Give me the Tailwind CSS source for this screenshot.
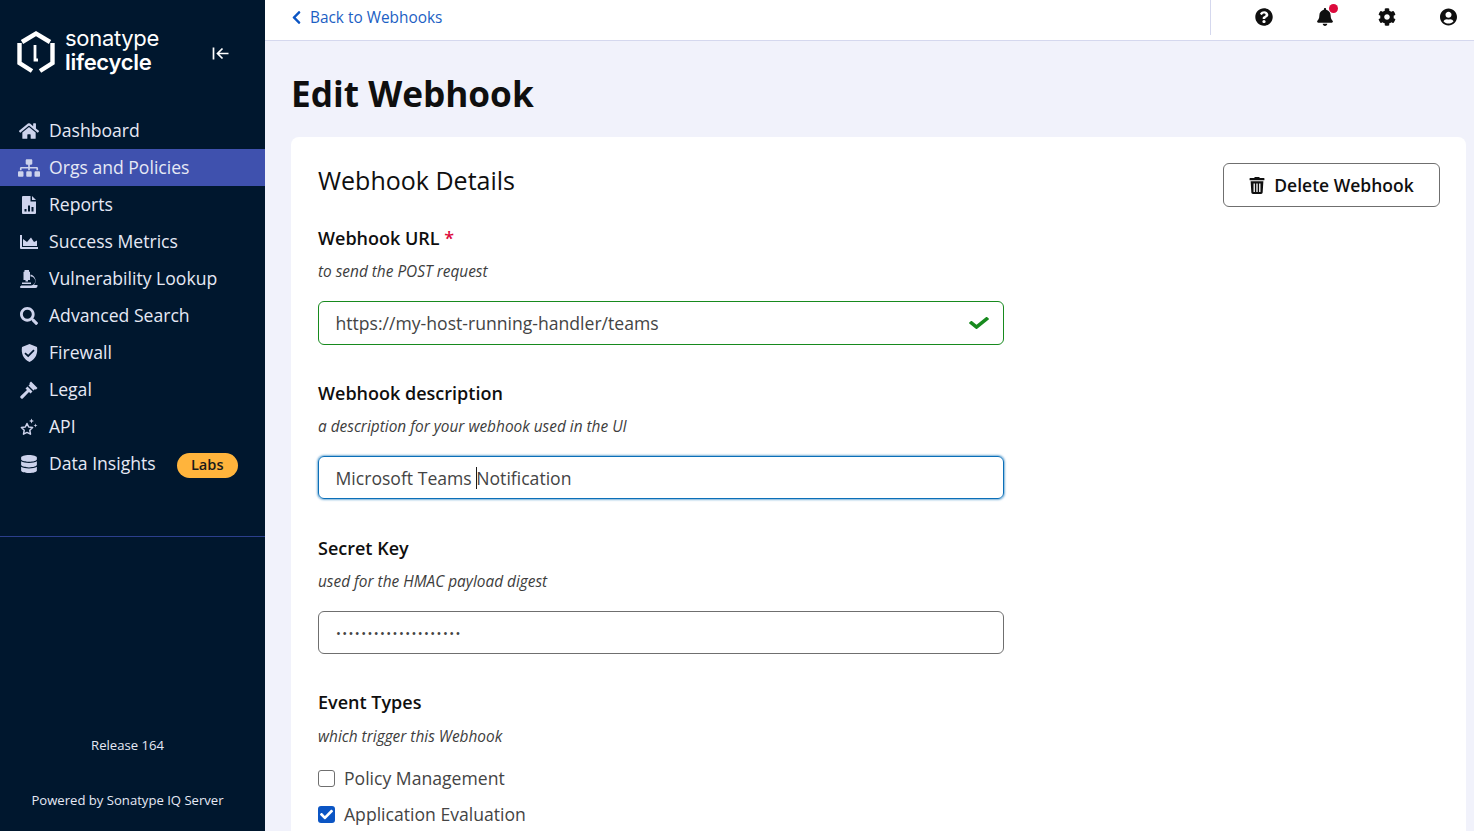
<!DOCTYPE html>
<html lang="en">
<head>
    <meta charset="UTF-8">
    <title>Edit Webhook - Sonatype Lifecycle</title>
    <script src="https://cdn.jsdelivr.net/npm/@tailwindcss/browser@4"></script>
</head>
<body class="h-screen overflow-hidden flex bg-[#f1f2fb] font-['Open_Sans',sans-serif] text-[#0f0f0f]">
    <!-- Sidebar -->
    <aside class="w-[265px] shrink-0 h-full flex flex-col bg-[#00172e] text-[#e6e9f5]">
        <div class="h-[112px] shrink-0 pl-[17px] pt-[27px] flex items-start">
            <svg class="w-[38px] h-[46px] mt-[3px] text-white" viewBox="0 0 38 46" fill="none" stroke="currentColor" stroke-width="4.4">
                <path d="M5 12 L19 3.5 L33 12"/>
                <path d="M2.5 13 V33 L15 41"/>
                <path d="M35.5 13 V33 L23 41"/>
                <path d="M18 15 V30 H21" stroke-width="2.8"/>
            </svg>
            <div class="ml-[10px] mt-[-1px] text-white text-[22px] leading-[24px] font-['Inter',sans-serif] tracking-[-0.3px]">
                <div class="font-normal">sonatype</div>
                <div class="font-semibold">lifecycle</div>
            </div>
            <svg class="w-[18px] h-[16px] ml-[53px] mt-[19px] text-white" viewBox="0 0 18 16" fill="none" stroke="currentColor" stroke-width="1.7">
                <path d="M1.5 1.5 V13.5"/>
                <path d="M16.5 7.5 H5.5 M10.5 2.5 L5.5 7.5 L10.5 12.5"/>
            </svg>
        </div>

        <nav class="text-[17.6px] h-[370px] shrink-0">
            <a class="h-[37px] flex items-center">
                <span class="w-[49px] flex justify-center pl-[9px] text-[#cdd3ec]">
                    <svg class="w-[20px] h-[18px]" viewBox="0 0 576 512" fill="currentColor"><path d="M280.37 148.26L96 300.11V464a16 16 0 0 0 16 16l112.06-.29a16 16 0 0 0 15.92-16V368a16 16 0 0 1 16-16h64a16 16 0 0 1 16 16v95.64a16 16 0 0 0 16 16.05L464 480a16 16 0 0 0 16-16V300L295.67 148.26a12.19 12.19 0 0 0-15.3 0zM571.6 251.47L488 182.56V44.05a12 12 0 0 0-12-12h-56a12 12 0 0 0-12 12v72.61L318.47 43a48 48 0 0 0-61 0L4.34 251.47a12 12 0 0 0-1.6 16.9l25.5 31A12 12 0 0 0 45.15 301l235.22-193.74a12.19 12.19 0 0 1 15.3 0L530.9 301a12 12 0 0 0 16.9-1.6l25.5-31a12 12 0 0 0-1.7-16.93z"/></svg>
                </span>
                Dashboard
            </a>
            <a class="h-[37px] flex items-center bg-[#3f51ae]">
                <span class="w-[49px] flex justify-center pl-[9px] text-[#cdd3ec]">
                    <svg class="w-[22px] h-[18px]" viewBox="0 0 640 512" fill="currentColor"><path d="M128 352H32c-17.67 0-32 14.33-32 32v96c0 17.67 14.33 32 32 32h96c17.67 0 32-14.33 32-32v-96c0-17.67-14.33-32-32-32zm-24-80h192v48h48v-48h192v48h48v-57.59c0-21.17-17.23-38.41-38.41-38.41H344v-64h40c17.67 0 32-14.33 32-32V32c0-17.67-14.33-32-32-32H256c-17.67 0-32 14.33-32 32v96c0 17.67 14.33 32 32 32h40v64H94.41C73.23 224 56 241.23 56 262.41V320h48v-48zm264 80h-96c-17.67 0-32 14.33-32 32v96c0 17.67 14.33 32 32 32h96c17.67 0 32-14.33 32-32v-96c0-17.67-14.33-32-32-32zm240 0h-96c-17.67 0-32 14.33-32 32v96c0 17.67 14.33 32 32 32h96c17.67 0 32-14.33 32-32v-96c0-17.67-14.33-32-32-32z"/></svg>
                </span>
                Orgs and Policies
            </a>
            <a class="h-[37px] flex items-center">
                <span class="w-[49px] flex justify-center pl-[9px] text-[#cdd3ec]">
                    <svg class="w-[14px] h-[18px]" viewBox="0 0 14 18" fill="currentColor"><path fill-rule="evenodd" d="M1 0 H8.5 V5.5 H14 V17 a1 1 0 0 1 -1 1 H1 a1 1 0 0 1 -1 -1 V1 a1 1 0 0 1 1 -1 Z M10 0 L14 4 H10 Z M2.5 13 V15.5 H4.5 V13 Z M6 9.5 V15.5 H8 V9.5 Z M9.5 11 V15.5 H11.5 V11 Z"/></svg>
                </span>
                Reports
            </a>
            <a class="h-[37px] flex items-center">
                <span class="w-[49px] flex justify-center pl-[9px] text-[#cdd3ec]">
                    <svg class="w-[18px] h-[14px]" viewBox="0 0 18 14" fill="currentColor"><path d="M0 0 H2 V12 H18 V14 H1 a1 1 0 0 1 -1 -1 Z M3 11 V4 L7 7 L11 2.5 L14 7 L17 5.5 V11 Z"/></svg>
                </span>
                Success Metrics
            </a>
            <a class="h-[37px] flex items-center">
                <span class="w-[49px] flex justify-center pl-[9px] text-[#cdd3ec]">
                    <svg class="w-[18px] h-[18px]" viewBox="0 0 18 18" fill="currentColor"><path d="M4.5 0 H9 V1.5 L10 2 V10 H8 V11.5 H5.5 V10 H3.5 V2 L4.5 1.5 Z M10.5 4.5 A6.5 6.5 0 0 1 14 15 H17.5 V16 a2 2 0 0 1 -2 2 H1 a0.5 0.5 0 0 1 0 -2 V15.5 H11 A4.5 4.5 0 0 0 10.5 6.5 Z M2 12.5 H11 V14 H2 Z"/></svg>
                </span>
                Vulnerability Lookup
            </a>
            <a class="h-[37px] flex items-center">
                <span class="w-[49px] flex justify-center pl-[9px] text-[#cdd3ec]">
                    <svg class="w-[18px] h-[18px]" viewBox="0 0 512 512" fill="currentColor"><path d="M505 442.7L405.3 343c-4.5-4.5-10.6-7-17-7H372c27.6-35.3 44-79.7 44-128C416 93.1 322.9 0 208 0S0 93.1 0 208s93.1 208 208 208c48.3 0 92.7-16.4 128-44v16.3c0 6.4 2.5 12.5 7 17l99.7 99.7c9.4 9.4 24.6 9.4 33.9 0l28.3-28.3c9.4-9.4 9.4-24.6.1-34zM208 336c-70.7 0-128-57.2-128-128 0-70.7 57.2-128 128-128 70.7 0 128 57.2 128 128 0 70.7-57.2 128-128 128z"/></svg>
                </span>
                Advanced Search
            </a>
            <a class="h-[37px] flex items-center">
                <span class="w-[49px] flex justify-center pl-[9px] text-[#cdd3ec]">
                    <svg class="w-[17px] h-[18px]" viewBox="0 0 17 18" fill="currentColor"><path fill-rule="evenodd" d="M8.5 0 L16 3 C17 9 15 15 8.5 18 C2 15 0 9 1 3 Z M4.5 8.5 L3.4 9.7 L7.2 13.3 L13.6 6.8 L12.4 5.6 L7.2 10.8 Z"/></svg>
                </span>
                Firewall
            </a>
            <a class="h-[37px] flex items-center">
                <span class="w-[49px] flex justify-center pl-[9px] text-[#cdd3ec]">
                    <svg class="w-[18px] h-[18px]" viewBox="0 0 18 18" fill="currentColor"><path d="M11 0.5 L17.5 7 L15.8 8.7 L15 8 L13.5 9.5 L8.5 4.5 L10 3 L9.3 2.2 Z M7.5 5.5 L12.5 10.5 L10.5 12.5 L9 11 L3 17.3 a1.4 1.4 0 0 1 -2 0 L0.7 17 a1.4 1.4 0 0 1 0 -2 L7 9 L5.5 7.5 Z"/></svg>
                </span>
                Legal
            </a>
            <a class="h-[37px] flex items-center">
                <span class="w-[49px] flex justify-center pl-[9px] text-[#cdd3ec]">
                    <svg class="w-[18px] h-[18px]" viewBox="0 0 18 18" fill="currentColor"><path d="M7 5.5 L8.7 9 L12.6 9.5 L9.8 12.3 L10.5 16.2 L7 14.4 L3.5 16.2 L4.2 12.3 L1.4 9.5 L5.3 9 Z" fill="none" stroke="currentColor" stroke-width="1.5" stroke-linejoin="round"/><path d="M11.5 0.5 L12.2 2.3 L14 3 L12.2 3.7 L11.5 5.5 L10.8 3.7 L9 3 L10.8 2.3 Z M15.5 5.5 L16 6.9 L17.5 7.5 L16 8.1 L15.5 9.5 L15 8.1 L13.5 7.5 L15 6.9 Z"/></svg>
                </span>
                API
            </a>
            <a class="h-[37px] flex items-center">
                <span class="w-[49px] flex justify-center pl-[9px] text-[#cdd3ec]">
                    <svg class="w-[16px] h-[18px]" viewBox="0 0 448 512" fill="currentColor"><path d="M448 73.143v45.714C448 159.143 347.667 192 224 192S0 159.143 0 118.857V73.143C0 32.857 100.333 0 224 0s224 32.857 224 73.143zM448 176v102.857C448 319.143 347.667 352 224 352S0 319.143 0 278.857V176c48.125 33.143 136.208 48.572 224 48.572S399.874 209.143 448 176zm0 160v102.857C448 479.143 347.667 512 224 512S0 479.143 0 438.857V336c48.125 33.143 136.208 48.572 224 48.572S399.874 369.143 448 336z"/></svg>
                </span>
                Data Insights
                <span class="ml-[21px] mt-[3px] w-[61px] h-[25px] rounded-full bg-[#ffb43c] text-[#1a1a1a] text-[14.6px] font-semibold flex items-center justify-center">Labs</span>
            </a>
        </nav>

        <div class="h-[55px] shrink-0 border-b border-[#2b3f8c]"></div>

        <div class="flex-1 flex flex-col items-center pr-[10px] text-[13.1px] text-[#e6e9f5]">
            <div class="mt-[199px] leading-[18px]">Release 164</div>
            <div class="mt-[37px] leading-[18px]">Powered by Sonatype IQ Server</div>
        </div>
    </aside>

    <!-- Main -->
    <div class="flex-1 min-w-0 h-full flex flex-col">
        <header class="h-[41px] shrink-0 bg-white border-b border-[#d5d8ee] flex items-start">
            <a class="h-[35px] flex items-center pl-[26px] text-[15.4px] text-[#1c5fc4] flex-1">
                <svg class="w-[11px] h-[15px] mr-[8px] mt-[-1px] text-[#0b55c4]" viewBox="0 0 320 512" fill="currentColor"><path d="M34.52 239.03L228.87 44.69c9.37-9.37 24.57-9.37 33.94 0l22.67 22.67c9.36 9.36 9.37 24.52.04 33.9L131.49 256l154.02 154.75c9.34 9.38 9.32 24.54-.04 33.9l-22.67 22.67c-9.37 9.37-24.57 9.37-33.94 0L34.52 272.97c-9.37-9.37-9.37-24.57 0-33.94z"/></svg>
                Back to Webhooks
            </a>
            <div class="w-[264px] h-[35px] border-l border-[#d5d8ee] flex items-center justify-between pl-[44px] pr-[17px]">
                <svg class="w-[18px] h-[18px] mt-[-1px]" viewBox="0 0 512 512" fill="#0f0f0f"><path d="M504 256c0 136.997-111.043 248-248 248S8 392.997 8 256C8 119.083 119.043 8 256 8s248 111.083 248 248zM262.655 90c-54.497 0-89.255 22.957-116.549 63.758-3.536 5.286-2.353 12.415 2.715 16.258l34.699 26.31c5.205 3.947 12.621 3.008 16.665-2.122 17.864-22.658 30.113-35.797 57.303-35.797 20.429 0 45.698 13.148 45.698 32.958 0 14.976-12.363 22.667-32.534 33.976C247.128 238.528 216 254.941 216 296v4c0 6.627 5.373 12 12 12h56c6.627 0 12-5.373 12-12v-1.333c0-28.462 83.186-29.647 83.186-106.667 0-58.002-60.165-102-116.531-102zM256 338c-25.365 0-46 20.635-46 46 0 25.364 20.635 46 46 46s46-20.636 46-46c0-25.365-20.635-46-46-46z"/></svg>
                <span class="relative mt-[-1px]">
                    <svg class="w-[16px] h-[18px] block" viewBox="0 0 448 512" fill="#0f0f0f"><path d="M224 512c35.32 0 63.97-28.65 63.97-64H160.03c0 35.35 28.65 64 63.97 64zm215.39-149.71c-19.32-20.76-55.47-51.99-55.47-154.29 0-77.7-54.48-139.9-127.94-155.16V32c0-17.67-14.32-32-31.98-32s-31.98 14.33-31.98 32v20.84C118.56 68.1 64.08 130.3 64.08 208c0 102.3-36.15 133.53-55.47 154.29-6 6.45-8.66 14.16-8.61 21.71.11 16.4 12.98 32 32.1 32h383.8c19.12 0 32-15.6 32.1-32 .05-7.55-2.61-15.27-8.61-21.71z"/></svg>
                    <span class="absolute top-[-4px] right-[-5px] w-[9px] h-[9px] rounded-full bg-[#dc0a3c]"></span>
                </span>
                <svg class="w-[18px] h-[18px] mt-[-1px]" viewBox="0 0 512 512" fill="#0f0f0f"><path d="M487.4 315.7l-42.6-24.6c4.3-23.2 4.3-47 0-70.2l42.6-24.6c4.9-2.8 7.1-8.6 5.5-14-11.1-35.6-30-67.8-54.7-94.6-3.8-4.1-10-5.1-14.8-2.3L380.8 110c-17.9-15.4-38.5-27.3-60.8-35.1V25.8c0-5.6-3.9-10.5-9.4-11.7-36.7-8.2-74.3-7.8-109.2 0-5.5 1.2-9.4 6.1-9.4 11.7V75c-22.2 7.9-42.8 19.8-60.8 35.1L88.7 85.5c-4.9-2.8-11-1.9-14.8 2.3-24.7 26.7-43.6 58.9-54.7 94.6-1.7 5.4.6 11.2 5.5 14L67.3 221c-4.3 23.2-4.3 47 0 70.2l-42.6 24.6c-4.9 2.8-7.1 8.6-5.5 14 11.1 35.6 30 67.8 54.7 94.6 3.8 4.1 10 5.1 14.8 2.3l42.6-24.6c17.9 15.4 38.5 27.3 60.8 35.1v49.2c0 5.6 3.9 10.5 9.4 11.7 36.7 8.2 74.3 7.8 109.2 0 5.5-1.2 9.4-6.1 9.4-11.7v-49.2c22.2-7.9 42.8-19.8 60.8-35.1l42.6 24.6c4.9 2.8 11 1.9 14.8-2.3 24.7-26.7 43.6-58.9 54.7-94.6 1.5-5.5-.7-11.3-5.6-14.1zM256 336c-44.1 0-80-35.9-80-80s35.9-80 80-80 80 35.9 80 80-35.9 80-80 80z"/></svg>
                <svg class="w-[17px] h-[18px] mt-[-1px]" viewBox="0 0 496 512" fill="#0f0f0f"><path d="M248 8C111 8 0 119 0 256s111 248 248 248 248-111 248-248S385 8 248 8zm0 96c48.6 0 88 39.4 88 88s-39.4 88-88 88-88-39.4-88-88 39.4-88 88-88zm0 344c-58.7 0-111.3-26.6-146.5-68.2 18.8-35.4 55.6-59.8 98.5-59.8 2.4 0 4.8.4 7.1 1.1 13 4.2 26.6 6.9 40.9 6.9 14.3 0 28-2.7 40.9-6.9 2.3-.7 4.7-1.1 7.1-1.1 42.9 0 79.7 24.4 98.5 59.8C359.3 421.4 306.7 448 248 448z"/></svg>
            </div>
        </header>

        <main class="flex-1 min-h-0 overflow-hidden pl-[26px] pr-[8px]">
            <h1 class="text-[35.2px] leading-[50px] font-bold mt-[27px] mb-[19px] text-[#0f0f0f]">Edit Webhook</h1>

            <section class="bg-white rounded-t-[8px] pl-[27px] pr-[26px] pt-[26px] h-[800px]">
                <div class="flex justify-between items-start h-[64px]">
                    <h2 class="text-[25px] leading-[36px] font-medium mt-[-1px]">Webhook Details</h2>
                    <button class="w-[217px] h-[44px] border border-[#6f6f6f] rounded-[6px] flex items-center justify-center gap-[9px] text-[17.5px] font-semibold">
                        <svg class="w-[16px] h-[17px]" viewBox="0 0 448 512"><path fill="#0f0f0f" d="M432 32H312l-9.4-18.7A24 24 0 0 0 281.1 0H166.8a23.72 23.72 0 0 0-21.4 13.3L136 32H16A16 16 0 0 0 0 48v32a16 16 0 0 0 16 16h416a16 16 0 0 0 16-16V48a16 16 0 0 0-16-16zM53.2 467a48 48 0 0 0 47.9 45h245.8a48 48 0 0 0 47.9-45L416 128H32z"/><path fill="#fff" d="M120 192h40v256h-40zM204 192h40v256h-40zM288 192h40v256h-40z"/></svg>
                        Delete Webhook
                    </button>
                </div>

                <div class="w-[686px]">
                    <div class="h-[157px]">
                        <div class="text-[18px] leading-[26px] font-semibold mt-[-2px]">Webhook URL <span class="text-[#dc0a3c]">*</span></div>
                        <div class="text-[15.4px] leading-[22px] italic text-[#3d3d3d] mt-[10px]">to send the POST request</div>
                        <div class="relative mt-[18px]">
                            <input type="text" value="https://my-host-running-handler/teams" class="w-full h-[44px] border border-[#178a1e] rounded-[6px] pl-[16.5px] pr-[40px] text-[17.6px] text-[#444] outline-none">
                            <svg class="absolute top-[14px] right-[15px] w-[20px] h-[16px] text-[#178a1e]" viewBox="0 0 512 512" fill="currentColor" preserveAspectRatio="none"><path d="M173.898 439.404l-166.4-166.4c-9.997-9.997-9.997-26.206 0-36.204l36.203-36.204c9.997-9.998 26.207-9.998 36.204 0L192 312.69 432.095 72.596c9.997-9.997 26.207-9.997 36.204 0l36.203 36.204c9.997 9.997 9.997 26.206 0 36.204l-294.4 294.401c-9.998 9.997-26.207 9.997-36.204-.001z"/></svg>
                        </div>
                    </div>

                    <div class="h-[157px]">
                        <div class="text-[18px] leading-[26px] font-semibold mt-[-2px]">Webhook description</div>
                        <div class="text-[15.4px] leading-[22px] italic text-[#3d3d3d] mt-[10px]">a description for your webhook used in the UI</div>
                        <div class="relative mt-[18px]">
                            <input type="text" value="Microsoft Teams Notification" class="w-full h-[43px] border border-[#0b6fb8] rounded-[6px] pl-[16.5px] text-[17.6px] text-[#444] outline-none shadow-[0_0_2px_1px_rgba(11,111,184,0.55)]">
                            <span class="absolute left-[158px] top-[11px] w-px h-[22px] bg-[#1a1a1a]"></span>
                        </div>
                    </div>

                    <div class="h-[156px]">
                        <div class="text-[18px] leading-[26px] font-semibold mt-[-2px]">Secret Key</div>
                        <div class="text-[15.4px] leading-[22px] italic text-[#3d3d3d] mt-[10px]">used for the HMAC payload digest</div>
                        <input type="password" value="aaaaaaaaaaaaaaaaaaaa" class="w-full h-[43px] mt-[18px] border border-[#6f6f6f] rounded-[6px] pl-[17px] text-[13px] tracking-[1.4px] text-[#444] outline-none">
                    </div>

                    <div>
                        <div class="text-[18px] leading-[26px] font-semibold mt-[-2px]">Event Types</div>
                        <div class="text-[15.4px] leading-[22px] italic text-[#3d3d3d] mt-[11px]">which trigger this Webhook</div>
                        <label class="flex items-center gap-[9px] h-[36px] mt-[12px] text-[17.6px] text-[#444]">
                            <span class="w-[17px] h-[17px] border border-[#6f6f6f] rounded-[3px]"></span>
                            Policy Management
                        </label>
                        <label class="flex items-center gap-[9px] h-[36px] text-[17.6px] text-[#444]">
                            <span class="w-[17px] h-[17px] rounded-[3px] bg-[#0b55c4] flex items-center justify-center">
                                <svg class="w-[13px] h-[13px] text-white" viewBox="0 0 512 512" fill="currentColor"><path d="M173.898 439.404l-166.4-166.4c-9.997-9.997-9.997-26.206 0-36.204l36.203-36.204c9.997-9.998 26.207-9.998 36.204 0L192 312.69 432.095 72.596c9.997-9.997 26.207-9.997 36.204 0l36.203 36.204c9.997 9.997 9.997 26.206 0 36.204l-294.4 294.401c-9.998 9.997-26.207 9.997-36.204-.001z"/></svg>
                            </span>
                            Application Evaluation
                        </label>
                    </div>
                </div>
            </section>
        </main>
    </div>
</body>
</html>
